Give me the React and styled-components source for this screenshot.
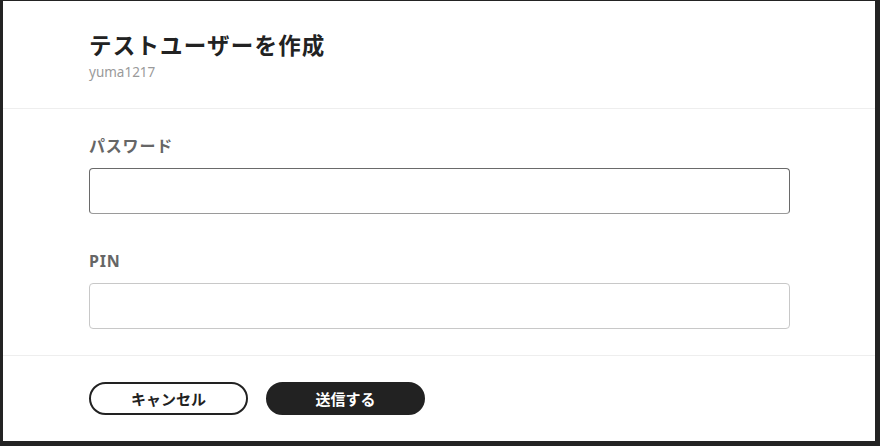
import React, { useState } from 'react'
import styled, { createGlobalStyle } from 'styled-components'

const GlobalStyle = createGlobalStyle`
  html, body {
    margin: 0;
    padding: 0;
    background: #232323;
  }
  body {
    font-family: "Noto Sans", "Noto Sans CJK JP", sans-serif;
  }
  * {
    box-sizing: border-box;
  }
`

export default function App() {
  const [password, setPassword] = useState('')
  const [pin, setPin] = useState('')

  return (
    <>
      <GlobalStyle />
      <Frame>
        <Panel>
          <Header>
            <Title>テストユーザーを作成</Title>
            <Subtitle>yuma1217</Subtitle>
          </Header>
          <Body>
            <Field>
              <Label>パスワード</Label>
              <Input
                type="password"
                strong
                value={password}
                onChange={(e) => setPassword(e.currentTarget.value)}
              />
            </Field>
            <Field>
              <Label>PIN</Label>
              <Input
                type="text"
                value={pin}
                onChange={(e) => setPin(e.currentTarget.value)}
              />
            </Field>
          </Body>
          <Footer>
            <Button type="button">キャンセル</Button>
            <Button type="button" primary>
              送信する
            </Button>
          </Footer>
        </Panel>
      </Frame>
    </>
  )
}

const Frame = styled.div`
  height: 446px;
  padding: 1px 5px 5px 3px;
  background: #232323;
`

const Panel = styled.div`
  height: 440px;
  background: #fff;
  display: flex;
  flex-direction: column;
`

const Header = styled.div`
  padding: 27px 85px 27px 86px;
  border-bottom: 1px solid #eeeeee;
`

const Title = styled.h1`
  margin: 0;
  font-family: "Noto Sans CJK JP", sans-serif;
  font-size: 22.5px;
  font-weight: 700;
  line-height: 32px;
  letter-spacing: 1.2px;
  color: #222;
`

const Subtitle = styled.p`
  margin: 3px 0 0;
  font-size: 13.5px;
  line-height: 18px;
  color: #9a9a9a;
`

const Body = styled.div`
  display: flex;
  flex-direction: column;
  gap: 36px;
  padding: 26px 85px 26px 86px;
`

const Field = styled.div`
  display: flex;
  flex-direction: column;
  gap: 11px;
`

const Label = styled.label`
  font-size: 16px;
  font-weight: 700;
  line-height: 22px;
  letter-spacing: 0.8px;
  color: #666;
`

const Input = styled.input`
  width: 100%;
  height: 46px;
  padding: 0 12px;
  font-size: 15px;
  border-radius: 4px;
  outline: none;
  background: #fff;
  border: 1px solid ${(p) => (p.strong ? '#6a6a6a' : '#c8c8c8')};
  border-bottom-color: ${(p) => (p.strong ? '#9a9a9a' : '#c8c8c8')};
`

const Footer = styled.div`
  display: flex;
  gap: 18px;
  padding: 26px 86px;
  border-top: 1px solid #eeeeee;
`

const Button = styled.button`
  width: 159px;
  height: 33px;
  border-radius: 17px;
  border: 2px solid #222;
  background: ${(p) => (p.primary ? '#222' : '#fff')};
  color: ${(p) => (p.primary ? '#fff' : '#222')};
  font-family: "Noto Sans CJK JP", sans-serif;
  font-size: 15px;
  font-weight: 700;
  cursor: pointer;
`
